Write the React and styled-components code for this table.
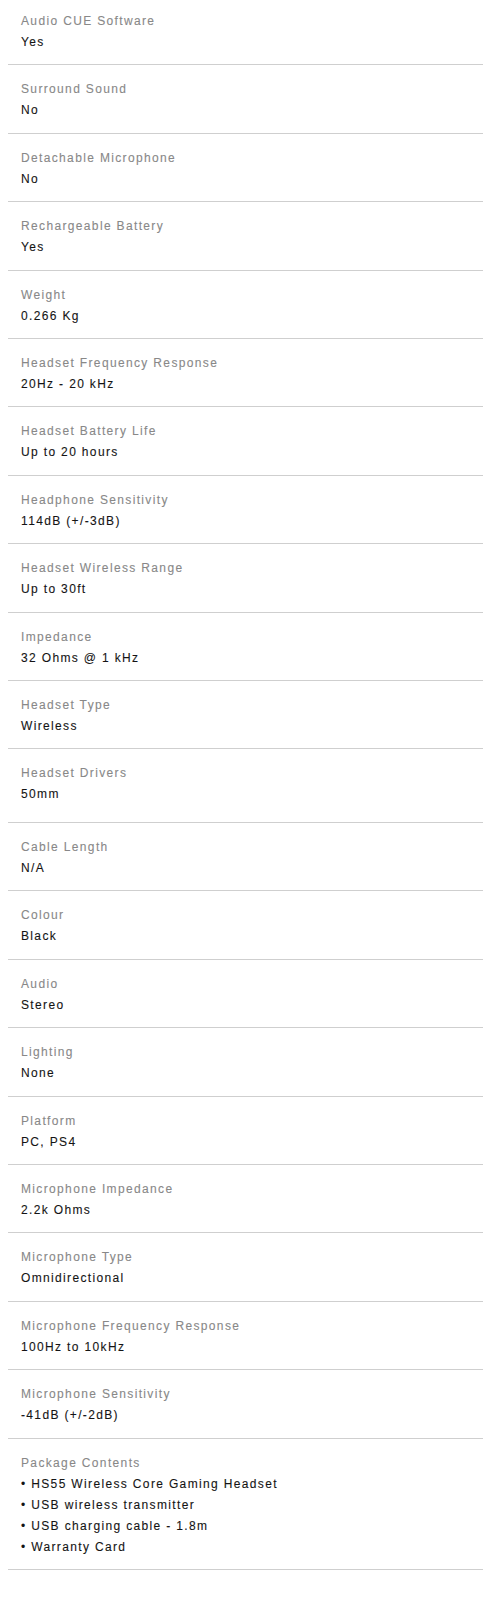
import React from 'react'
import styled, { createGlobalStyle } from 'styled-components'

const GlobalStyle = createGlobalStyle`
  body {
    margin: 0;
    background: #fff;
    font-family: "Liberation Sans", Arial, sans-serif;
  }
`

const specs = [
  ['Audio CUE Software', 'Yes'],
  ['Surround Sound', 'No'],
  ['Detachable Microphone', 'No'],
  ['Rechargeable Battery', 'Yes'],
  ['Weight', '0.266 Kg'],
  ['Headset Frequency Response', '20Hz - 20 kHz'],
  ['Headset Battery Life', 'Up to 20 hours'],
  ['Headphone Sensitivity', '114dB (+/-3dB)'],
  ['Headset Wireless Range', 'Up to 30ft'],
  ['Impedance', '32 Ohms @ 1 kHz'],
  ['Headset Type', 'Wireless'],
  ['Headset Drivers', '50mm', true],
  ['Cable Length', 'N/A'],
  ['Colour', 'Black'],
  ['Audio', 'Stereo'],
  ['Lighting', 'None'],
  ['Platform', 'PC, PS4'],
  ['Microphone Impedance', '2.2k Ohms'],
  ['Microphone Type', 'Omnidirectional'],
  ['Microphone Frequency Response', '100Hz to 10kHz'],
  ['Microphone Sensitivity', '-41dB (+/-2dB)'],
]

const contents = [
  'HS55 Wireless Core Gaming Headset',
  'USB wireless transmitter',
  'USB charging cable - 1.8m',
  'Warranty Card',
]

export default function App() {
  return (
    <>
      <GlobalStyle />
      <SpecList>
        {specs.map(([label, value, tall]) => (
          <Row key={label} $tall={tall}>
            <Label>{label}</Label>
            <Value>{value}</Value>
          </Row>
        ))}
        <Row>
          <Label>Package Contents</Label>
          <Bullets>
            {contents.map((item) => (
              <li key={item}>{item}</li>
            ))}
          </Bullets>
        </Row>
      </SpecList>
    </>
  )
}

const SpecList = styled.div`
  margin-left: 8px;
`

const Row = styled.div`
  padding: 14px 0 ${(p) => (p.$tall ? '16.8px' : '11.4px')} 13px;
  border-bottom: 1px solid #cfcfcf;
  font-size: 12px;
  line-height: 21px;
  letter-spacing: 1.35px;
  -webkit-text-stroke: 0.1px;

  &:first-child {
    padding-top: 11px;
  }
`

const Label = styled.div`
  color: #888;
`

const Value = styled.div`
  color: #141414;
`

const Bullets = styled.ul`
  list-style: none;
  margin: 0;
  padding: 0;
  color: #141414;

  li::before {
    content: '• ';
  }
`
